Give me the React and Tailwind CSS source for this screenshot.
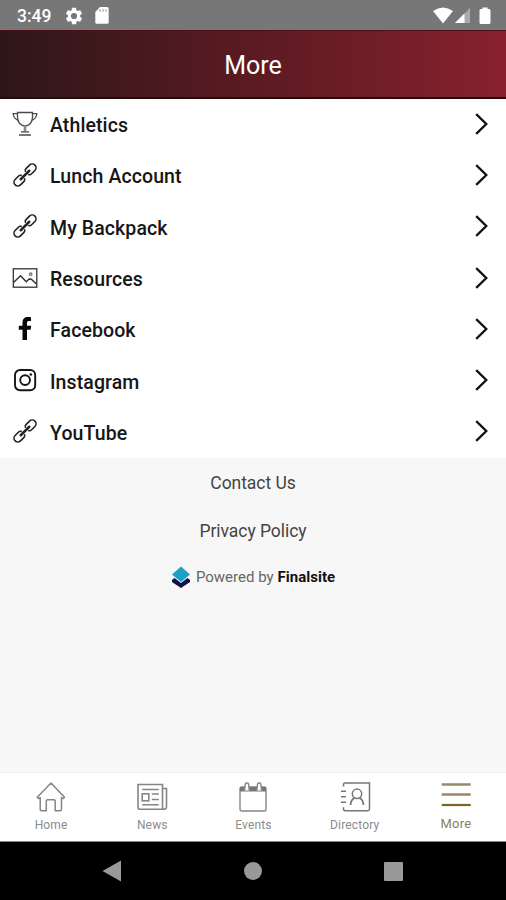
import React from "react";

function Trophy() {
  return (
    <svg width="26" height="26" viewBox="0 0 26 26" fill="none" stroke="#4a4a4a" strokeWidth="1.300">
      <path d="M5.500 1.500h15v4.500c0 5-3.200 8.300-7.500 9.200C8.700 14.300 5.500 11 5.500 6z" />
      <path d="M5.500 2.700H1.200c.3 4.200 2.800 6 5.600 6.800M20.500 2.700h4.300c-.3 4.200-2.800 6-5.600 6.800" />
      <path d="M13 15.500v4.500" stroke="#888" strokeWidth="2.600" />
      <path d="M9 20.800h8M7 24h12" stroke="#777" strokeWidth="1.800" />
    </svg>
  );
}

function Chain() {
  return (
    <svg width="26" height="26" viewBox="0 0 26 26" fill="none" stroke="#222" strokeWidth="1.600" strokeLinecap="round">
      <g transform="rotate(-45 13 13)">
        <path d="M10 10.500Q9.500 9.200 7.500 9.200H2.800a3.800 3.800 0 0 0 0 7.600H7.500Q9.500 16.800 10 15.500" />
        <path d="M16 10.500q.5-1.300 2.500-1.300h4.700a3.800 3.800 0 0 1 0 7.600h-4.700q-2 0-2.500-1.300" />
        <path d="M7 13h12" strokeWidth="2.500" />
      </g>
    </svg>
  );
}

function Picture() {
  return (
    <svg width="26" height="26" viewBox="0 0 26 26" fill="none" stroke="#333" strokeWidth="1.300">
      <rect x="1.300" y="3.800" width="23.500" height="18.400" />
      <path d="M1.500 17.500l7-6.700 5.800 6 2.800-2.800 2.200.3 5.200 4.700" strokeWidth="1.500" />
      <circle cx="18.700" cy="9.200" r="1.200" stroke="#777" />
    </svg>
  );
}

function Facebook() {
  return (
    <svg width="26" height="26" viewBox="0 0 26 26" fill="#080808">
      <path d="M10.500 24V13.700H6.800V9.800h3.700V6.800C10.500 3 12.600 1 16 1c1.400 0 2.600.1 3 .2v3.700h-2c-1.700 0-2 .9-2 2.200v2.700h4.200l-.6 3.900H15V24z" />
    </svg>
  );
}

function Instagram() {
  return (
    <svg width="26" height="26" viewBox="0 0 26 26" fill="none" stroke="#151515" strokeWidth="1.900">
      <rect x="3" y="3" width="20.200" height="20.200" rx="5" />
      <circle cx="13.100" cy="13.100" r="4.900" />
      <circle cx="18.800" cy="7.500" r="1.300" fill="#151515" stroke="none" />
    </svg>
  );
}

const links = [
  ["Athletics", Trophy],
  ["Lunch Account", Chain],
  ["My Backpack", Chain],
  ["Resources", Picture],
  ["Facebook", Facebook],
  ["Instagram", Instagram],
  ["YouTube", Chain],
];

function LinkRow({ label, Icon }) {
  return (
    <li className="flex h-[51.3px] items-center pl-3 pr-[17px]">
      <span className="mb-[2px]"><Icon /></span>
      <span className="ml-3 mt-[3px] flex-1 text-[19.500px] font-medium leading-6 tracking-[0.1px] text-[#161616]">{label}</span>
      <svg className="mb-[2px]" width="14" height="24" viewBox="0 0 14 24" fill="none" stroke="#111" strokeWidth="2.300">
        <path d="M1.200 2.200L11.300 12L1.200 21.800" />
      </svg>
    </li>
  );
}

function HomeIcon() {
  return (
    <svg width="32" height="32" viewBox="0 0 32 32" fill="none" stroke="#858585" strokeWidth="1.500" strokeLinejoin="round">
      <path d="M16 2L2.200 16.300l1.300 1.300 1.700-1v11.600q0 1.500 1.500 1.500h4.600V20q0-1.200 1.200-1.200h6.500q1.200 0 1.200 1.200v9.700h4.800q1.500 0 1.500-1.500V16.600l1.700 1 1.300-1.300z" />
    </svg>
  );
}

function NewsIcon() {
  return (
    <svg width="32" height="32" viewBox="0 0 32 32" fill="none" stroke="#858585" strokeWidth="1.600">
      <path d="M26.500 3.500H2v22.800q0 2 2 2h24q2.500 0 2.500-2.500V7.500h-4zM26.500 7.500V26q0 2.300 1.700 2.300" />
      <rect x="6.200" y="12.800" width="6.600" height="7" />
      <path d="M6.200 8.500h16.500M15.800 13h7M15.800 18.500h7M6.200 23.800h16.500" />
    </svg>
  );
}

function EventsIcon() {
  return (
    <svg width="32" height="32" viewBox="0 0 32 32" fill="none" stroke="#858585" strokeWidth="1.400">
      <rect x="3" y="6" width="26" height="24" rx="2" />
      <path d="M3 6h26v4.500H3z" fill="#777" stroke="none" />
      <path d="M7.500 9.500l.7-6q.1-1.500 1.300-1.500h.8q1.200 0 1.300 1.500l.7 6M19.800 9.500l.7-6q.1-1.500 1.300-1.500h.8q1.200 0 1.300 1.500l.7 6" fill="white" />
    </svg>
  );
}

function DirectoryIcon() {
  return (
    <svg width="32" height="32" viewBox="0 0 32 32" fill="none" stroke="#777" strokeWidth="1.500">
      <path d="M4.500 5.500V3.500q0-1.500 1.500-1.500h24.500v26q0 1.700-1.700 1.700H6.200q-1.700 0-1.700-2v-1.500M2 10.300h5M2 15.800h5M2 21.300h5" />
      <circle cx="18" cy="12.800" r="4.700" />
      <path d="M11.500 24q.5-5.500 4-6.800M20.500 17.200q3.500 1.300 4 6.800" strokeWidth="1.800" />
    </svg>
  );
}

function MenuIcon() {
  return (
    <svg width="32" height="32" viewBox="0 0 32 32" fill="none" strokeWidth="2">
      <path d="M1.700 3.500h29M1.700 13.500h29" stroke="#958969" strokeWidth="2.600" />
      <path d="M1.700 24h29" stroke="#786522" strokeWidth="2.200" />
    </svg>
  );
}

const tabs = [
  ["Home", HomeIcon],
  ["News", NewsIcon],
  ["Events", EventsIcon],
  ["Directory", DirectoryIcon],
];

export default function App() {
  return (
    <div className="flex h-[900px] w-[506px] flex-col overflow-hidden bg-[#f7f7f7] font-['Roboto',sans-serif]">
      <div className="flex h-[30px] shrink-0 items-center bg-[#777] pl-[17px] pr-[15px] text-white">
        <span className="mt-[2px] text-[17.500px] font-medium leading-5">3:49</span>
        <svg className="ml-[14px] mt-[1px]" width="18" height="18" viewBox="1.500 1.500 21 21" fill="white">
          <path d="M19.140 12.940c.04-.3.060-.61.060-.94s-.02-.64-.07-.94l2.030-1.580a.49.49 0 0 0 .12-.61l-1.920-3.320a.49.49 0 0 0-.59-.22l-2.390.96a7 7 0 0 0-1.620-.94L14.400 2.810a.48.48 0 0 0-.48-.41h-3.840a.47.47 0 0 0-.47.41l-.36 2.540c-.59.24-1.130.57-1.620.94l-2.390-.96a.48.48 0 0 0-.59.22L2.740 8.870a.47.47 0 0 0 .12.61l2.030 1.580a6 6 0 0 0 0 1.880l-2.030 1.580a.49.49 0 0 0-.12.61l1.920 3.320c.12.22.37.29.59.22l2.390-.96c.5.380 1.030.7 1.620.94l.36 2.540c.05.24.24.41.48.41h3.840c.24 0 .44-.17.47-.41l.36-2.540a7 7 0 0 0 1.620-.94l2.390.96c.22.08.47 0 .59-.22l1.920-3.320a.47.47 0 0 0-.12-.61zM12 15.600a3.600 3.600 0 1 1 0-7.200 3.600 3.600 0 0 1 0 7.200z" />
        </svg>
        <svg className="ml-3 mt-[1px]" width="14" height="17" viewBox="0 0 14 17" fill="white">
          <path d="M5 0h7q1.700 0 1.700 1.700v13.600q0 1.500-1.700 1.500H2q-1.700 0-1.700-1.500V5z" />
          <path d="M5 2.500v2M8 2.500v2M11 2.500v2" stroke="#aaa" strokeWidth="1.600" />
        </svg>
        <svg className="ml-auto mt-[1px]" width="20" height="17" viewBox="0 0 20 17" fill="white"><path d="M0 4Q10-3 20 4L10 16.500z" /></svg>
        <svg className="ml-[2px] mt-[1px]" width="16" height="17" viewBox="0 0 16 17"><path d="M15 1v15H0z" fill="#aaa" /><path d="M9.500 6.500V16H0z" fill="white" /></svg>
        <svg className="ml-2 mt-[1px]" width="12" height="18" viewBox="0 0 12 18" fill="white"><path d="M3.500 2V.5h5V2h1.500q1.500 0 1.500 1.500v12q0 1.500-1.500 1.500H2Q.5 17 .5 15.500v-12Q.5 2 2 2z" /></svg>
      </div>
      <header className="flex h-[69px] shrink-0 items-center justify-center border-b-2 border-t border-b-[#260b0e] border-t-[#4b1018] bg-linear-to-r from-[#2d1618] via-[#5c1a22] to-[#88212f] pt-[4px]">
        <h1 className="text-[25px] font-normal leading-8 text-white">More</h1>
      </header>
      <ul className="shrink-0 bg-white">
        {links.map(([label, Icon]) => <LinkRow key={label} label={label} Icon={Icon} />)}
      </ul>
      <main className="flex flex-1 flex-col items-center pt-[13px] text-[#444]">
        <p className="text-[17.500px] leading-6 -tracking-[0.05px]">Contact Us</p>
        <p className="mt-6 text-[17.500px] leading-6 -tracking-[0.05px]">Privacy Policy</p>
        <div className="mt-[22px] flex items-center text-[15px] leading-6">
          <svg className="mr-[5px]" width="20" height="22" viewBox="0 0 20 22">
            <path d="M1 14l2.500-2 6.500 5 6.500-5 2.500 2v2l-9 6-9-6z" fill="#10104c" />
            <path d="M10 .5l9 8-9 7.500-9-7.500z" fill="#1ba0c8" />
          </svg>
          <span className="text-[#666]">Powered by</span>
          <span className="ml-1 font-bold text-[#111]">Finalsite</span>
        </div>
      </main>
      <nav className="grid h-[70px] shrink-0 grid-cols-5 border-b border-t border-b-[#888] border-t-[#f0f0f0] bg-white text-[12px] leading-4 text-[#8c8c8c]">
        {tabs.map(([label, Icon]) => (
          <div key={label} className="flex flex-col items-center pl-px pt-2">
            <Icon />
            <span className="mt-1 text-[12px] tracking-[0.15px]">{label}</span>
          </div>
        ))}
        <div className="flex flex-col items-center pl-px pt-2 text-[13px] text-[#8a8060]">
          <MenuIcon />
          <span className="mt-[3px] tracking-[0.2px]">More</span>
        </div>
      </nav>
      <div className="flex h-[58px] shrink-0 items-center bg-black pl-[102px] text-[#999]">
        <svg width="20" height="22" viewBox="0 0 20 22" fill="currentColor"><path d="M0.500 11L19 .5v21z" /></svg>
        <span className="ml-[122px] h-[18px] w-[18px] rounded-full bg-[#999]" />
        <span className="ml-[122px] h-[19px] w-[19px] rounded-[1px] bg-[#999]" />
      </div>
    </div>
  );
}
